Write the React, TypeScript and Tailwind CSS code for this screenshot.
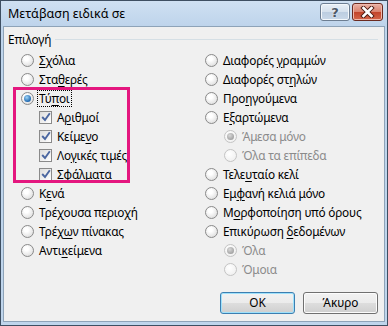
import React from "react";

type Row = { kind: "radio" | "check"; text: string; checked?: boolean; disabled?: boolean; sub?: boolean; focus?: boolean };

const leftRows: Row[] = [
  { kind: "radio", text: "&Σχόλια" },
  { kind: "radio", text: "Στα&θερές" },
  { kind: "radio", text: "Τύ&ποι", checked: true, focus: true },
  { kind: "check", text: "Α&ριθμοί", checked: true },
  { kind: "check", text: "Κείμε&νο", checked: true },
  { kind: "check", text: "Λο&γικές τιμές", checked: true },
  { kind: "check", text: "Σφά&λματα", checked: true },
  { kind: "radio", text: "Κ&ενά" },
  { kind: "radio", text: "Τρέχουσα περιο&χή" },
  { kind: "radio", text: "Τρέχ&ων πίνακας" },
  { kind: "radio", text: "Αντι&κείμενα" },
];

const rightRows: Row[] = [
  { kind: "radio", text: "Διαφορές &γραμμών" },
  { kind: "radio", text: "Διαφορές στ&ηλών" },
  { kind: "radio", text: "Προ&ηγούμενα" },
  { kind: "radio", text: "Ε&ξαρτώμενα" },
  { kind: "radio", text: "Άμεσα μόνο", sub: true, disabled: true, checked: true },
  { kind: "radio", text: "Όλα τα επίπεδα", sub: true, disabled: true },
  { kind: "radio", text: "Τελε&υταίο κελί" },
  { kind: "radio", text: "Εμ&φανή κελιά μόνο" },
  { kind: "radio", text: "Μ&ορφοποίηση υπό όρους" },
  { kind: "radio", text: "Επικύρωση &δεδομένων" },
  { kind: "radio", text: "Όλα", sub: true, disabled: true, checked: true },
  { kind: "radio", text: "Όμοια", sub: true, disabled: true },
];

function Label({ t }: { t: string }) {
  const i = t.indexOf("&");
  if (i < 0) return <>{t}</>;
  return (
    <>
      {t.slice(0, i)}
      <span className="underline underline-offset-[2px]">{t[i + 1]}</span>
      {t.slice(i + 2)}
    </>
  );
}

function Radio({ checked, disabled }: { checked?: boolean; disabled?: boolean }) {
  return (
    <span
      className={`flex h-[13px] w-[13px] shrink-0 items-center justify-center rounded-full border ${
        disabled
          ? "border-[#c4c4c4] bg-[radial-gradient(circle_at_40%_35%,#ffffff,#ececec)]"
          : "border-[#8a8a8a] bg-[radial-gradient(circle_at_40%_35%,#ffffff_20%,#d4d4d4)]"
      }`}
    >
      {checked && (
        <span
          className={`h-[7px] w-[7px] rounded-full ${
            disabled
              ? "bg-[radial-gradient(circle_at_40%_35%,#d8d8d8,#8e8e8e)]"
              : "bg-[radial-gradient(circle_at_40%_35%,#9fd6f8,#1f68b0_70%,#174f8a)]"
          }`}
        />
      )}
    </span>
  );
}

function Check({ checked }: { checked?: boolean }) {
  return (
    <span className="flex h-[13px] w-[13px] shrink-0 items-center justify-center border border-[#8a8a8a] bg-[linear-gradient(135deg,#dcdcdc,#ffffff)]">
      {checked && (
        <svg width="10" height="10" viewBox="0 0 10 10">
          <path d="M1.2 5 L4 8 L8.8 1.2" fill="none" stroke="#4a66a0" strokeWidth="1.9" />
        </svg>
      )}
    </span>
  );
}

function OptionRow({ row }: { row: Row }) {
  return (
    <div className={`flex h-[19px] items-center ${row.sub ? "pl-[19px]" : row.kind === "check" ? "pl-[18px]" : ""}`}>
      {row.kind === "radio" ? <Radio checked={row.checked} disabled={row.disabled} /> : <Check checked={row.checked} />}
      <span
        className={`ml-[4px] px-[1px] leading-[15px] tracking-[-0.2px] ${row.disabled ? "text-[#8b8b8b]" : "text-black"} ${
          row.focus ? "outline outline-1 outline-dotted outline-black" : ""
        }`}
      >
        <Label t={row.text} />
      </span>
    </div>
  );
}

function WinButton({ children, focused }: { children: React.ReactNode; focused?: boolean }) {
  return (
    <div
      className={`flex h-[22px] w-[75px] items-center justify-center rounded-[3px] border bg-[linear-gradient(#f2f2f2_0%,#ebebeb_50%,#dddddd_51%,#cfcfcf_100%)] text-black ${
        focused ? "border-[#3c7fb1] shadow-[inset_0_0_0_1px_#9fe1fb]" : "border-[#707070] shadow-[inset_0_0_0_1px_#fcfcfc]"
      }`}
    >
      {children}
    </div>
  );
}

export default function App() {
  return (
    <div className="flex h-[326px] w-[388px] flex-col border border-[#3e4f62] bg-[#bfd5ec] font-['Noto_Sans',sans-serif] text-[11.8px]">
      {/* title bar */}
      <div className="flex h-[25px] shrink-0 items-center justify-between bg-[linear-gradient(#cfe0f2,#bed4eb)] pl-[7px] pr-[4px]">
        <span className="pt-[2px] text-[12.5px] text-black">Μετάβαση ειδικά σε</span>
        <div className="mb-[5px] flex gap-[2px] self-start pt-[2px]">
          <div className="flex h-[18px] w-[30px] items-center justify-center rounded-[3px] border border-[#6d7e92] bg-[linear-gradient(#e9f0f7_0%,#d4e0ec_50%,#bccde0_51%,#c9d8e8_100%)] shadow-[inset_0_0_0_1px_#f4f8fb]">
            <span className="font-['DejaVu_Sans',sans-serif] text-[13px] font-bold leading-none text-[#4d5967] [text-shadow:0_0_2px_#ffffff]">?</span>
          </div>
          <div className="flex h-[18px] w-[31px] items-center justify-center rounded-[3px] border border-[#6b2a20] bg-[linear-gradient(#eab2a6_0%,#d9806c_50%,#c2432a_51%,#d5664a_100%)] shadow-[inset_0_0_0_1px_#efb9ad]">
            <svg width="15" height="12" viewBox="0 0 15 12">
              <path d="M3.5 2 L11.5 10 M11.5 2 L3.5 10" stroke="#4a1a12" strokeWidth="4.4" strokeLinecap="square" />
              <path d="M3.5 2 L11.5 10 M11.5 2 L3.5 10" stroke="#ffffff" strokeWidth="2.6" strokeLinecap="square" />
            </svg>
          </div>
        </div>
      </div>

      {/* client area */}
      <div className="mx-[2px] mb-[3px] flex flex-1 flex-col border border-[#8ea3b8] bg-[#f0f0f0] pb-[7px] pl-[4px] pr-[6px] pt-[4px]">
        <div className="flex items-center">
          <span className="tracking-[-0.15px] text-black">Επιλογή</span>
          <div className="ml-[4px] h-px flex-1 bg-[#d5dfe5]" />
        </div>

        <div className="mt-[2px] grid grid-cols-[184px_1fr] pl-[13px]">
          <div className="relative flex flex-col">
            {leftRows.map((r) => (
              <OptionRow key={r.text} row={r} />
            ))}
            <div className="absolute left-[-8px] top-[36px] h-[96px] w-[117px] border-[3px] border-[#e4177f]" />
          </div>
          <div className="flex flex-col">
            {rightRows.map((r) => (
              <OptionRow key={r.text} row={r} />
            ))}
          </div>
        </div>

        <div className="mt-auto flex justify-end gap-[8px]">
          <WinButton focused>OK</WinButton>
          <WinButton>Άκυρο</WinButton>
        </div>
      </div>
    </div>
  );
}
